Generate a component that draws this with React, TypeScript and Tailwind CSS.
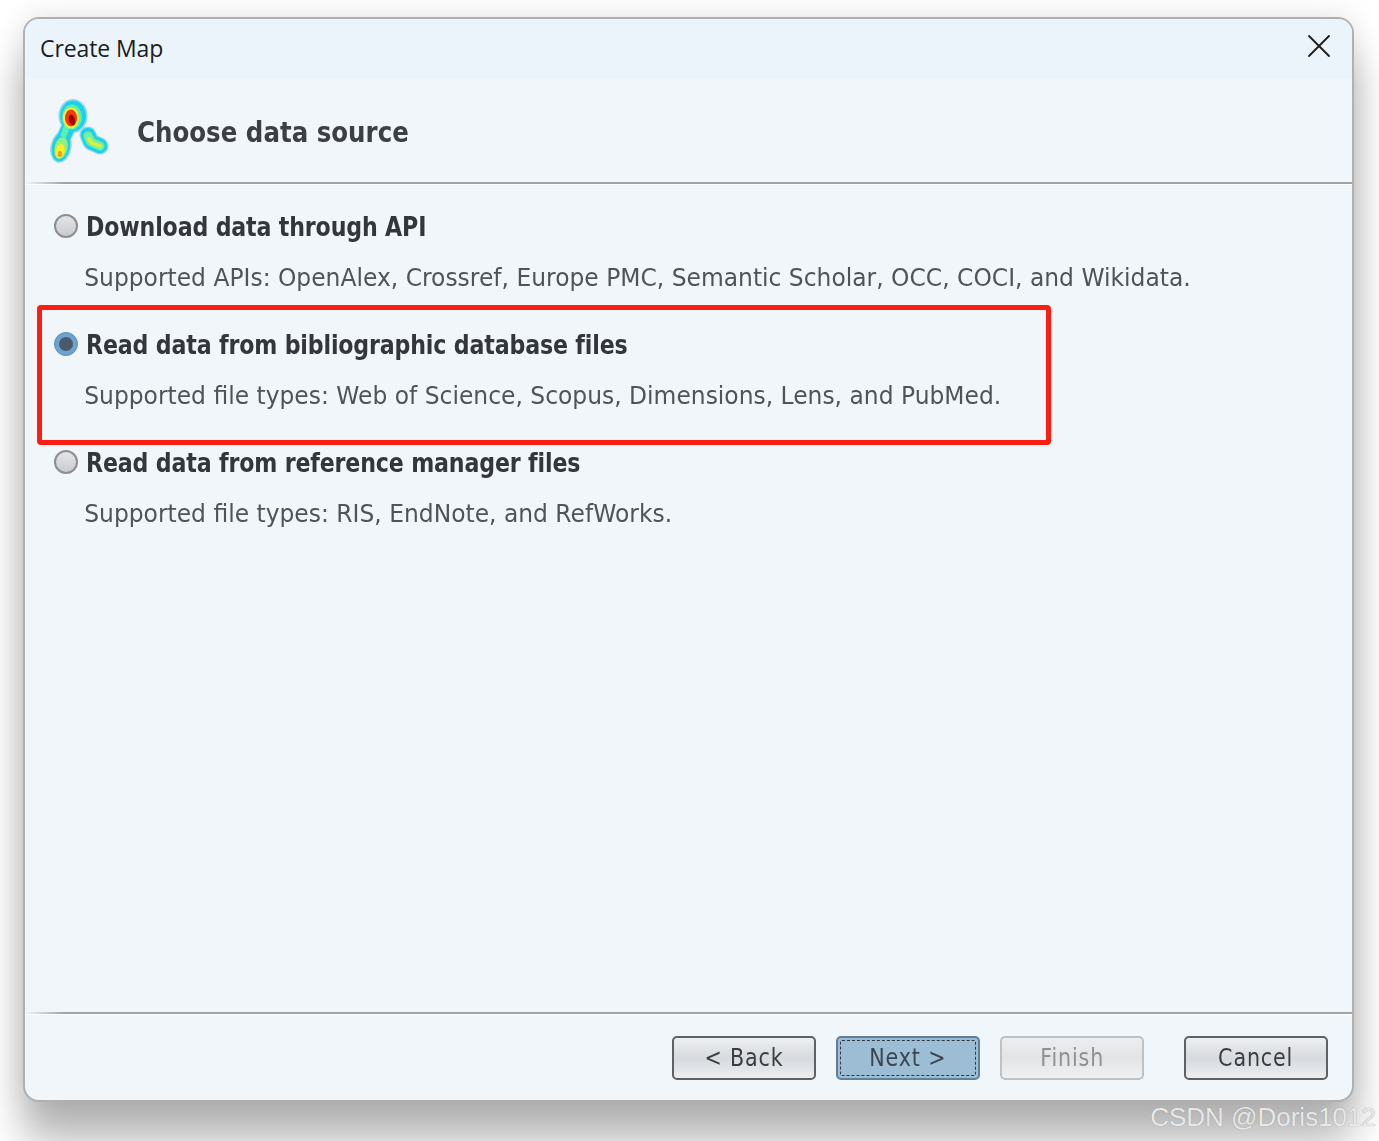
import { X } from 'lucide-react';

const dejavu = "font-['DejaVu_Sans',sans-serif]";

// carte de chaleur du logo
function Logo() {
    return (
        <svg width="64" height="68" viewBox="48 96 64 68" className="shrink-0">
            <defs>
                <filter id="soft" x="-20%" y="-20%" width="140%" height="140%"><feGaussianBlur stdDeviation="0.7" /></filter>
            </defs>
            <g filter="url(#soft)">
                <g fill="#8fd8ee" stroke="#8fd8ee" strokeWidth="2">
                    <ellipse cx="73" cy="115" rx="13.5" ry="16" />
                    <ellipse cx="61" cy="146" rx="9.5" ry="15" transform="rotate(12 61 146)" />
                    <path d="M69 125 L63 138" strokeWidth="15" />
                    <path d="M88 134 L91 141 L100 145" fill="none" strokeWidth="17" strokeLinecap="round" strokeLinejoin="round" />
                </g>
                <g fill="#1fd0ec" stroke="#1fd0ec">
                    <ellipse cx="73" cy="115" rx="12.5" ry="15" />
                    <ellipse cx="61" cy="146" rx="8.5" ry="14" transform="rotate(12 61 146)" />
                    <path d="M69 125 L63 138" strokeWidth="13" />
                    <path d="M88 134 L91 141 L100 145" fill="none" strokeWidth="14.5" strokeLinecap="round" strokeLinejoin="round" />
                </g>
                <ellipse cx="72" cy="116" rx="10" ry="12.5" fill="#5cf0b0" />
                <path d="M67 125 L63 136" stroke="#5cf0b0" strokeWidth="6" />
                <ellipse cx="71" cy="117" rx="8" ry="10.5" fill="#f4f030" />
                <ellipse cx="71" cy="117" rx="6" ry="8.5" fill="#f03a10" />
                <ellipse cx="72" cy="119" rx="3" ry="5.5" transform="rotate(-15 72 119)" fill="#a80000" />
                <ellipse cx="61" cy="147" rx="6.5" ry="11" transform="rotate(12 61 147)" fill="#90f080" />
                <ellipse cx="60" cy="150" rx="4.5" ry="7.5" transform="rotate(12 60 150)" fill="#f6ee28" />
                <ellipse cx="60" cy="153" rx="2.2" ry="3" fill="#f0a018" />
                <path d="M88 135 L91 141 L100 145" fill="none" stroke="#70f0a0" strokeWidth="9" strokeLinecap="round" strokeLinejoin="round" />
                <path d="M89 138 L92 142 L100 145" fill="none" stroke="#d8f040" strokeWidth="4" strokeLinecap="round" strokeLinejoin="round" />
            </g>
        </svg>
    );
}

function Divider() {
    return <div className="h-[2px] shrink-0 bg-gradient-to-r from-[#f1f6fb] via-[#9ea3a6] via-[3%] to-[#9ea3a6] shadow-[0_1px_0_#ffffff]" />;
}

function Radio({ selected }: { selected?: boolean }) {
    if (selected) {
        return (
            <span className="flex h-6 w-6 shrink-0 items-center justify-center rounded-full border border-[#5d8fb8] bg-[#6fa3cf]">
                <span className="h-3.5 w-3.5 rounded-full bg-[#4a5a6c]" />
            </span>
        );
    }
    return <span className="h-6 w-6 shrink-0 rounded-full border-2 border-[#8b8e92] bg-gradient-to-b from-[#e4e5e7] to-[#c9cbce]" />;
}

function Option({ title, text, selected }: { title: string; text: string; selected?: boolean }) {
    return (
        <div className="h-[118px] pl-[29px]">
            <div className="flex h-[34px] items-center gap-[8px]">
                <Radio selected={selected} />
                <span className="pt-[2px] text-[26px] font-bold tracking-[-0.2px] text-[#33363a] whitespace-nowrap origin-left scale-x-[0.852]">{title}</span>
            </div>
            <p className="mt-[18px] pl-[31px] text-[24px] leading-[34px] text-[#505357] whitespace-nowrap origin-left scale-x-[0.975]">{text}</p>
        </div>
    );
}

function Btn({ label, kind }: { label: string; kind?: 'focus' | 'off' }) {
    const skin = kind === 'focus'
        ? 'border-[#5f7f9c] bg-[#9dbdd4] text-[#3a4653]'
        : kind === 'off'
            ? 'border-[#bfc2c5] bg-gradient-to-b from-[#eceef0] via-[#e2e4e6] to-[#eef0f1] text-[#8d9196]'
            : 'border-[#5e6166] bg-gradient-to-b from-[#eef0f2] via-[#d7dade] to-[#eceef0] text-[#3a3d41]';
    return (
        <button className={`relative flex h-[44px] w-[144px] items-center justify-center rounded-[5px] border-2 text-[24px] tracking-[1px] ${skin}`}>
            {kind === 'focus' && <span className="absolute inset-[2px] rounded-[2px] border border-dashed border-[#2e3a46]" />}
            <span className="inline-block scale-x-[0.86] whitespace-nowrap">{label}</span>
        </button>
    );
}

export default function App() {
    return (
        <div className={`relative h-[1141px] w-[1379px] overflow-hidden bg-white pl-[23px] pt-[17px] ${dejavu}`}>
            <div className="flex h-[1085px] w-[1331px] flex-col rounded-[16px] border-2 border-[#b0b0b0] bg-[#f1f6fb] shadow-[0_40px_40px_0_rgba(0,0,0,0.28),0_0_30px_rgba(0,0,0,0.12)]">
                <div className="flex h-[60px] shrink-0 items-center justify-between rounded-t-[14px] bg-[#ebf4fb] pb-[2px] pl-[15px] pr-[13px]">
                    <span className="font-['Open_Sans',sans-serif] text-[23px] tracking-[-0.1px] text-[#1c1c1c]">Create Map</span>
                    <X size={40} strokeWidth={1.1} className="mb-[4px] text-[#1c1c1c]" />
                </div>
                <div className="flex h-[103px] shrink-0 items-center gap-[25px] pl-[23px]">
                    <Logo />
                    <h1 className="pt-[5px] text-[29px] font-bold text-[#3c3f43] whitespace-nowrap origin-left scale-x-[0.845]">Choose data source</h1>
                </div>
                <Divider />
                <div className="flex-1 pt-[25px]">
                    <Option title="Download data through API" text="Supported APIs: OpenAlex, Crossref, Europe PMC, Semantic Scholar, OCC, COCI, and Wikidata." />
                    <Option selected title="Read data from bibliographic database files" text="Supported file types: Web of Science, Scopus, Dimensions, Lens, and PubMed." />
                    <Option title="Read data from reference manager files" text="Supported file types: RIS, EndNote, and RefWorks." />
                </div>
                <Divider />
                <div className="flex h-[86px] shrink-0 items-center justify-end pt-[1px] pr-[24px]">
                    <div className="flex gap-[20px]">
                        <Btn label="< Back" />
                        <Btn label="Next >" kind="focus" />
                        <Btn label="Finish" kind="off" />
                    </div>
                    <div className="ml-[40px]"><Btn label="Cancel" /></div>
                </div>
            </div>
            {/* cadre rouge d'annotation */}
            <div className="absolute left-[37px] top-[305px] h-[140px] w-[1014px] rounded-[4px] border-[5px] border-[#ff1c12]" />
            <span className="absolute right-[3px] top-[1102px] font-['Liberation_Sans',sans-serif] text-[26px] leading-[30px] text-[#e8e8e8] [text-shadow:0_0_1px_#8a8a8a]">CSDN @Doris1012</span>
        </div>
    );
}
